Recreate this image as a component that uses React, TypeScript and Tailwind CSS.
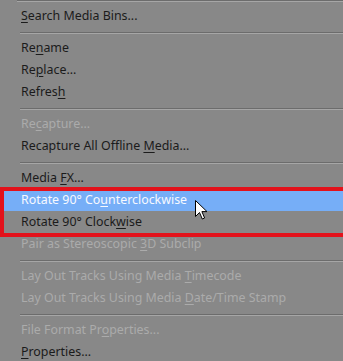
type Entry = { label: string; disabled?: boolean; active?: boolean } | "sep";

// "&" marks the mnemonic letter, like a Win32 menu resource
const menu: Entry[] = [
  { label: "&Search Media Bins..." },
  "sep",
  { label: "Re&name" },
  { label: "Re&place..." },
  { label: "Refres&h" },
  "sep",
  { label: "Re&capture...", disabled: true },
  { label: "Recapture All Offline &Media..." },
  "sep",
  { label: "Media &FX..." },
  { label: "Rotate 90° Co&unterclockwise", active: true },
  { label: "Rotate 90° Clock&wise" },
  { label: "Pair as Stereoscopic &3D Subclip", disabled: true },
  "sep",
  { label: "Lay Out Tracks Using Media &Timecode", disabled: true },
  { label: "Lay Out Tracks Using Media &Date/Time Stamp", disabled: true },
  "sep",
  { label: "File Format Pr&operties...", disabled: true },
  { label: "&Properties..." },
];

function Label({ text }: { text: string }) {
  const i = text.indexOf("&");
  if (i < 0) return <span>{text}</span>;
  return (
    <span>
      {text.slice(0, i)}
      <span className="underline decoration-1 underline-offset-[2px]">{text[i + 1]}</span>
      {text.slice(i + 2)}
    </span>
  );
}

function Separator({ first = false }: { first?: boolean }) {
  return (
    <div className={first ? "h-[5px] pl-[17px]" : "h-[10px] pl-[20px] pt-[5px]"}>
      <div className="h-px bg-[#6c6c6c]" />
      <div className="h-px bg-[#a6a6a6]" />
    </div>
  );
}

function Cursor() {
  return (
    <svg width="13" height="21" viewBox="0 0 13 21" className="absolute left-[195px] top-[200px]">
      <path
        d="M0.5 0.5 L0.5 16.5 L4.5 12.5 L7.3 19 L9.6 18 L6.9 11.6 L12 11.6 Z"
        fill="#fff"
        stroke="#000"
        strokeWidth="1"
      />
    </svg>
  );
}

export default function App() {
  return (
    <div className="relative h-[361px] w-[343px] overflow-hidden bg-[#888888] font-['Noto_Sans',sans-serif] text-[12.4px]">
      <Separator first />
      {menu.map((it, idx) =>
        it === "sep" ? (
          <Separator key={idx} />
        ) : (
          <div
            key={idx}
            className={
              "flex h-[22px] items-center whitespace-nowrap pl-[21px] leading-none " +
              (it.active ? "bg-[#76aef7] text-[#f6f9ff]" : it.disabled ? "text-[#ababab]" : "text-[#1b1b1b]")
            }
          >
            <Label text={it.label} />
          </div>
        )
      )}

      {/* annotation box around the two rotate entries */}
      <div className="absolute left-0 top-[187px] h-[50px] w-[360px] border-4 border-[#e3121b]" />
      <Cursor />
    </div>
  );
}
